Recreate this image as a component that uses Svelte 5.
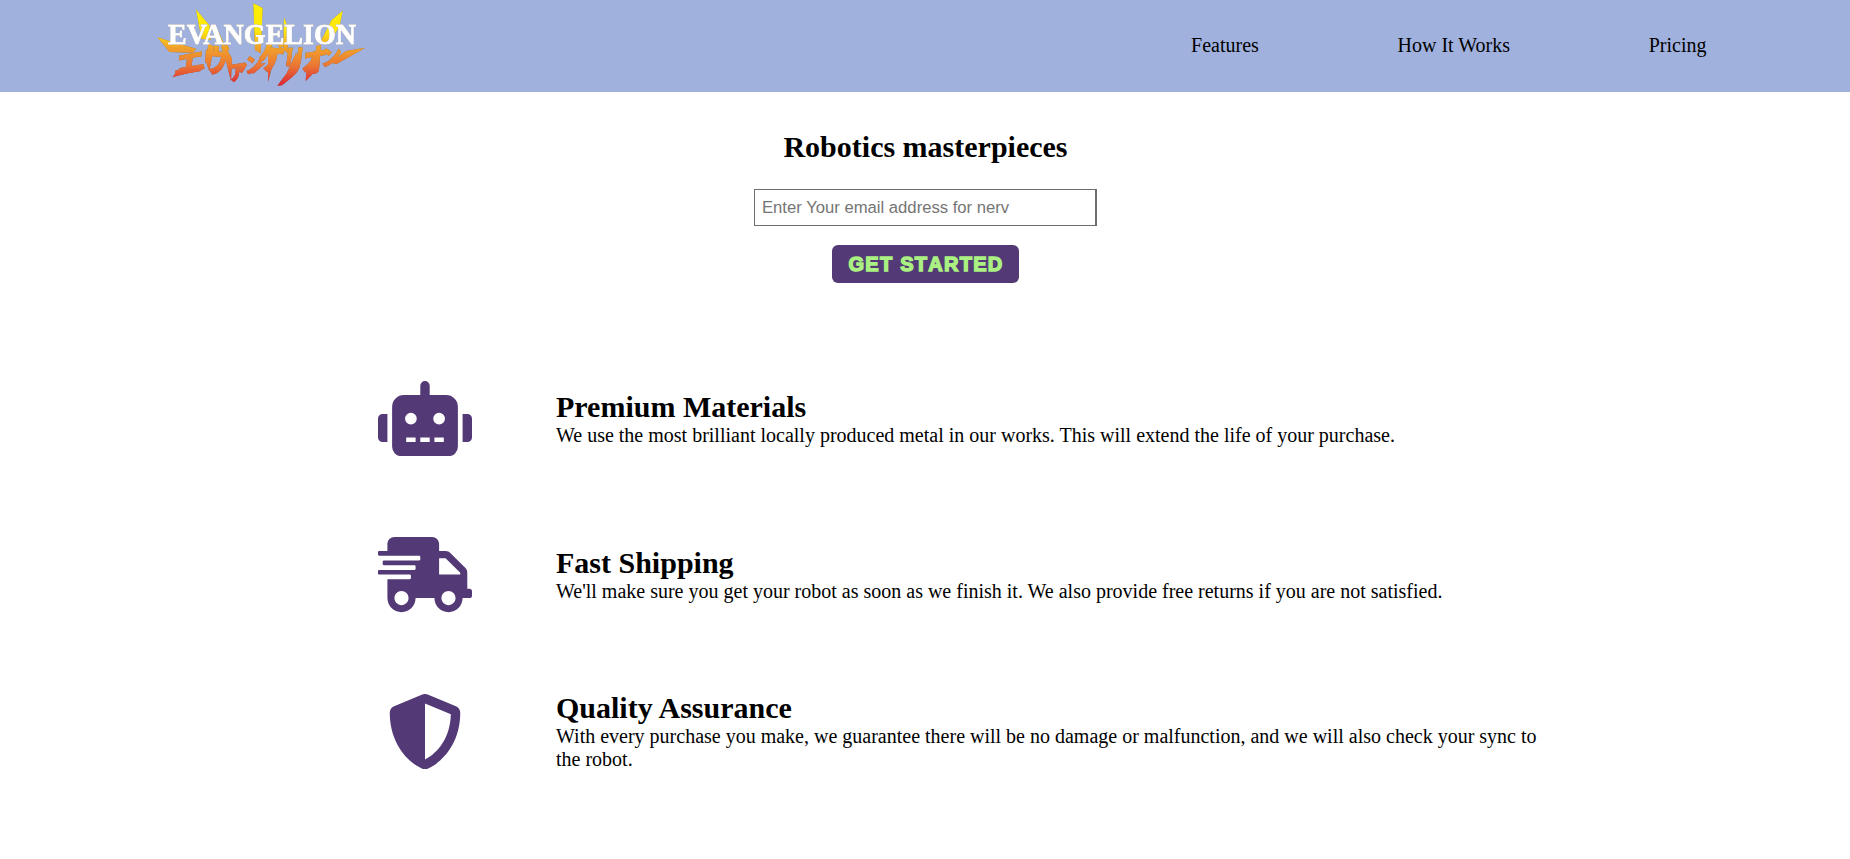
<script>
  const links = ['Features', 'How It Works', 'Pricing'];
  const features = [
    {
      title: 'Premium Materials',
      text: 'We use the most brilliant locally produced metal in our works. This will extend the life of your purchase.',
      box: '0 0 640 512',
      path: 'M32,224H64V416H32A31.96,31.96,0,0,1,0,384V256A31.96,31.96,0,0,1,32,224Zm512-48V448a64.06,64.06,0,0,1-64,64H160a64.06,64.06,0,0,1-64-64V176a79.97,79.97,0,0,1,80-80H288V32a32,32,0,0,1,64,0V96H464A79.97,79.97,0,0,1,544,176ZM264,256a40,40,0,1,0-40,40A39.997,39.997,0,0,0,264,256Zm-8,128H192v32h64Zm96,0H288v32h64ZM456,256a40,40,0,1,0-40,40A39.997,39.997,0,0,0,456,256Zm-8,128H384v32h64ZM640,256V384a31.96,31.96,0,0,1-32,32H576V224h32A31.96,31.96,0,0,1,640,256Z'
    },
    {
      title: 'Fast Shipping',
      text: "We'll make sure you get your robot as soon as we finish it. We also provide free returns if you are not satisfied.",
      box: '0 0 640 512',
      path: 'M624 352h-16V243.9c0-12.7-5.1-24.9-14.1-33.9L494 110.1c-9-9-21.2-14.1-33.9-14.1H416V48c0-26.5-21.5-48-48-48H112C85.5 0 64 21.5 64 48v48H8c-4.4 0-8 3.6-8 8v16c0 4.4 3.6 8 8 8h272c4.4 0 8 3.6 8 8v16c0 4.4-3.6 8-8 8H40c-4.4 0-8 3.6-8 8v16c0 4.4 3.6 8 8 8h208c4.4 0 8 3.6 8 8v16c0 4.4-3.6 8-8 8H8c-4.4 0-8 3.6-8 8v16c0 4.4 3.6 8 8 8h208c4.4 0 8 3.6 8 8v16c0 4.4-3.6 8-8 8H64v128c0 53 43 96 96 96s96-43 96-96h128c0 53 43 96 96 96s96-43 96-96h48c8.8 0 16-7.2 16-16v-32c0-8.8-7.2-16-16-16zM160 464c-26.5 0-48-21.5-48-48s21.5-48 48-48 48 21.5 48 48-21.5 48-48 48zm320 0c-26.5 0-48-21.5-48-48s21.5-48 48-48 48 21.5 48 48-21.5 48-48 48zm80-208H416V144h44.1l99.9 99.9V256z'
    },
    {
      title: 'Quality Assurance',
      text: 'With every purchase you make, we guarantee there will be no damage or malfunction, and we will also check your sync to the robot.',
      box: '-64 0 640 512',
      path: 'M466.5 83.7l-192-80a48.15 48.15 0 0 0-36.9 0l-192 80C27.7 91.1 16 108.6 16 128c0 198.5 114.5 335.7 221.5 380.3 11.8 4.9 25.1 4.9 36.9 0C360.1 472.6 496 349.3 496 128c0-19.4-11.7-36.9-29.5-44.3zM256.1 446.3l-.1-381 175.9 73.3c-3.3 151.4-82.1 261.1-175.8 307.7z'
    }
  ];
  // Katakana of the logo: glyph and its placement matrix
  const kana = [
    ['エ', 'matrix(.98 -.18 -.12 .92 100 228)'],
    ['ヴ', 'matrix(.84 .06 -.05 1.05 190 213)'],
    ['ァ', 'matrix(.72 -.1 0 .85 262 240)'],
    ['ン', 'matrix(.62 -.16 0 .7 315 222)'],
    ['ゲ', 'matrix(.86 0 -.1 1.1 354 208)'],
    ['リ', 'matrix(.72 0 -.15 1.15 424 224)'],
    ['オ', 'matrix(.82 -.14 -.1 1.05 484 222)'],
    ['ン', 'matrix(.7 -.16 0 .72 542 200)']
  ];
  // Blades and long strokes around the lettering
  const blades = [
    '168,28 208,76 212,120 184,116',
    '340,10 368,24 362,160 345,150',
    '432,52 441,76 444,160 430,150',
    '608,32 599,78 566,132 540,128 575,60',
    '52,112 90,124 168,146 160,158 88,156 74,138',
    '676,143 590,192 572,188 618,153',
    '97,232 120,204 190,192 194,206',
    '236,96 258,145 276,175 273,243',
    '384,245 384,165 396,140 410,150',
    '412,257 440,220 468,160 480,170 456,232 426,256',
    '497,243 500,205 528,150 546,150 520,220',
    '208,213 196,180 206,130 222,140',
    '320,220 350,194 378,188 342,220'
  ];
</script>

<header>
  <svg class="logo" viewBox="0 0 720 276">
    <defs>
      <linearGradient id="flame" gradientUnits="userSpaceOnUse" x1="0" y1="0" x2="0" y2="260">
        <stop offset="0" stop-color="#fff000" />
        <stop offset=".36" stop-color="#ffe70a" />
        <stop offset=".54" stop-color="#f1a42a" />
        <stop offset=".76" stop-color="#eb7634" />
        <stop offset="1" stop-color="#dc2038" />
      </linearGradient>
      <mask id="shape" maskUnits="userSpaceOnUse" x="0" y="0" width="720" height="276">
        <g fill="#fff">
          {#each blades as points}<polygon {points} />{/each}
          {#each kana as [glyph, transform]}<text class="kana" {transform}>{glyph}</text>{/each}
        </g>
      </mask>
    </defs>
    <g class="flame"><rect width="720" height="276" fill="url(#flame)" mask="url(#shape)" /></g>
    <text class="name" x="84" y="131" textLength="564" lengthAdjust="spacingAndGlyphs">EVANGELION</text>
  </svg>
  <nav>
    {#each links as link}<a href="#top">{link}</a>{/each}
  </nav>
</header>

<main>
  <section class="hero">
    <h2>Robotics masterpieces</h2>
    <input type="email" placeholder="Enter Your email address for nerv" />
    <button>GET STARTED</button>
  </section>
  <section class="features">
    {#each features as f}
      <article>
        <svg class="icon" viewBox={f.box}><path d={f.path} /></svg>
        <div>
          <h3>{f.title}</h3>
          <p>{f.text}</p>
        </div>
      </article>
    {/each}
  </section>
</main>

<style>
  :global(body) {
    margin: 0;
    height: 859px;
    overflow: hidden;
    background: #fff;
    color: #000;
    font: 20px/23px 'Liberation Serif', 'Times New Roman', serif;
  }
  h2, h3, p { margin: 0; }
  header {
    display: flex;
    justify-content: space-between;
    align-items: center;
    box-sizing: border-box;
    height: 92px;
    padding: 0 143.5px 0 140px;
    background: #a1b1de;
  }
  .logo { width: 240px; height: 92px; }
  .flame { filter: drop-shadow(0 0 1.5px #776a55); }
  .kana {
    font: 900 90px 'Noto Sans CJK JP', sans-serif;
    stroke: #fff;
    stroke-width: 2px;
  }
  .name {
    font: bold 87px 'Liberation Serif', serif;
    fill: #fff;
    stroke: #fff;
    stroke-width: 2.5px;
    filter: drop-shadow(0 0 1.5px #807870);
  }
  nav { display: flex; gap: 138.7px; padding-bottom: 2px; }
  a { color: #000; text-decoration: none; }
  .hero {
    display: flex;
    flex-direction: column;
    align-items: center;
    box-sizing: border-box;
    height: 248px;
    padding-top: 38px;
  }
  h2, h3 { font-size: 30px; line-height: 34px; font-weight: bold; }
  h2 { padding-left: 1px; }
  input {
    box-sizing: border-box;
    width: 343px;
    height: 37px;
    margin-top: 25px;
    padding: 0 7.5px;
    border: 1px solid #6d6d6d;
    border-right-width: 2px;
    border-radius: 0;
    font: 16.67px 'Liberation Sans', Arial, sans-serif;
  }
  input::placeholder { color: #757575; opacity: 1; }
  button {
    width: 187px;
    height: 38px;
    margin-top: 19px;
    padding: 1px 0 0 2px;
    border: 0;
    border-radius: 6px;
    background: #533975;
    color: #aaf082;
    font: bold 20px 'Arial Black', 'Liberation Sans', sans-serif;
    font-kerning: none;
    letter-spacing: 1.25px;
    -webkit-text-stroke: 1.4px #aaf082;
    white-space: nowrap;
  }
  article {
    display: flex;
    align-items: center;
    gap: 84px;
    height: 156.3px;
    padding-left: 378px;
  }
  .icon {
    width: 94px;
    height: 75.2px;
    flex: none;
    margin-top: 1px;
    fill: #533975;
  }
  article div { width: 990px; }
</style>
